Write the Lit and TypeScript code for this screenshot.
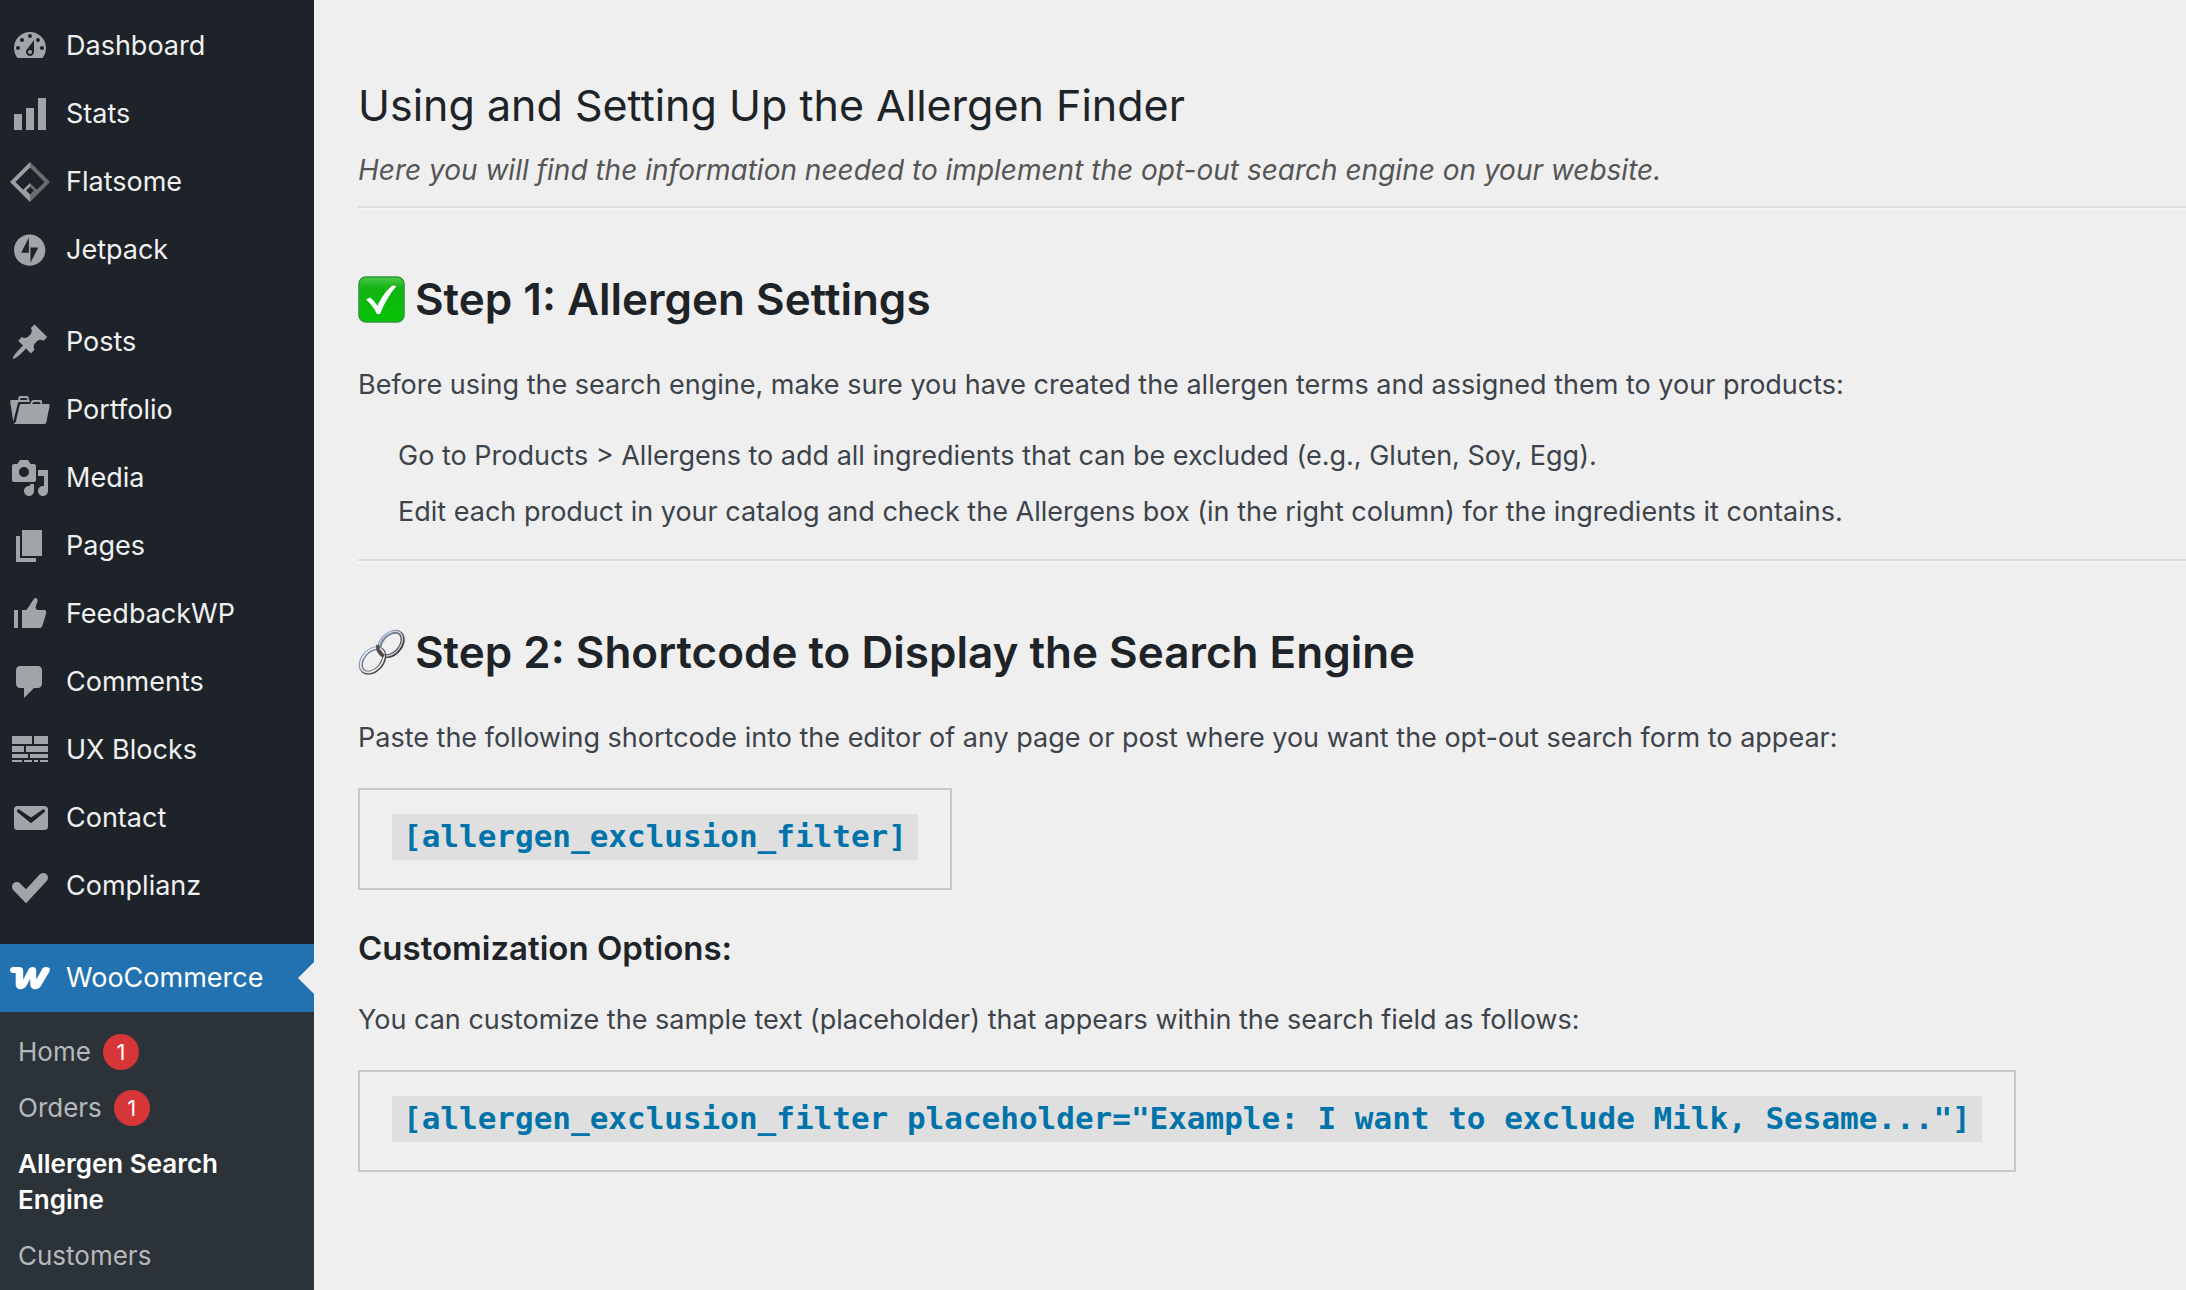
import { LitElement, html, css, svg, nothing } from "lit";
import { customElement } from "lit/decorators.js";

interface MenuItem {
  label: string;
  icon: unknown;
}

const glyph = (d: string) => svg`<path fill="currentColor" fill-rule="evenodd" d=${d}></path>`;

const icons = {
  dashboard: glyph(
    "M3.76 16h12.48c1.1-1.37 1.76-3.11 1.76-5 0-4.42-3.58-8-8-8s-8 3.58-8 8c0 1.89.66 3.63 1.76 5zM10 4c.55 0 1 .45 1 1s-.45 1-1 1-1-.45-1-1 .45-1 1-1zM6 6c.55 0 1 .45 1 1s-.45 1-1 1-1-.45-1-1 .45-1 1-1zm8 0c.55 0 1 .45 1 1s-.45 1-1 1-1-.45-1-1 .45-1 1-1zm-5.37 5.55L12 7v6c0 1.1-.9 2-2 2s-2-.9-2-2c0-.57.24-1.08.63-1.45zM4 10c.55 0 1 .45 1 1s-.45 1-1 1-1-.45-1-1 .45-1 1-1zm12 0c.55 0 1 .45 1 1s-.45 1-1 1-1-.45-1-1 .45-1 1-1zm-5 3c0-.55-.45-1-1-1s-1 .45-1 1 .45 1 1 1 1-.45 1-1z"
  ),
  stats: glyph("M18 18V2h-4v16h4zm-6 0V7H8v11h4zm-6 0v-8H2v8h4z"),
  flatsome: svg`
    <path fill="#9b9fa2" d="M10 0v2.7L2.7 10l3.9 3.9L10 10.5v1.9l-1.9 1.9 1.9 1.9V20L0 10z"></path>
    <path fill="#696e72" d="M10 0l10 10-10 10v-3.8l1.9-1.9-1.9-1.9v-1.9l3.4 3.4 3.9-3.9L10 2.7z"></path>`,
  jetpack: svg`<path fill="currentColor" fill-rule="evenodd" transform="translate(2 2.2) scale(.49)" d="M16 0C7.2 0 0 7.2 0 16s7.2 16 16 16 16-7.2 16-16S24.8 0 16 0zm-.8 18.6H7.3l7.9-15.5v15.5zm1.6 10.2V13.4h8l-8 15.5z"></path>`,
  posts: glyph(
    "M10.44 3.02l1.82-1.82 6.36 6.35-1.83 1.82c-1.05-.68-2.48-.57-3.41.36l-.75.75c-.92.93-1.04 2.35-.35 3.41l-1.83 1.82-2.41-2.41-2.8 2.79c-.42.42-3.38 2.71-3.8 2.29s1.86-3.39 2.28-3.81l2.79-2.79L4.1 9.36l1.83-1.82c1.05.69 2.48.57 3.4-.36l.75-.75c.93-.92 1.05-2.35.36-3.41z"
  ),
  portfolio: glyph(
    "M4 5H.78c-.37 0-.74.32-.69.84l1.56 9.99S3.5 8.47 3.86 6.7c.11-.53.61-.7.98-.7H10s-.7-2.08-.77-2.31C9.11 3.25 8.89 3 8.45 3H5.14c-.36 0-.7.23-.8.64C4.25 4.04 4 5 4 5zm4.88 0h-4s.42-1 .87-1h2.13c.48 0 1 1 1 1zM2.67 16.25c-.31.47-.76.75-1.26.75h15.73c.54 0 .92-.31 1.03-.83.44-2.19 1.68-8.44 1.68-8.44.07-.5-.3-.73-.62-.73H16V5.53c0-.16-.26-.53-.66-.53h-3.76c-.52 0-.87.58-.87.58L10 7H5.59c-.32 0-.63.19-.69.5 0 0-1.59 6.7-1.72 7.33-.07.37-.22.99-.51 1.42zM15.38 7H11s.58-1 1.13-1h2.29c.71 0 .96 1 .96 1z"
  ),
  media: glyph(
    "M13 11V4c0-.55-.45-1-1-1h-1.67L9 1H5L3.67 3H2c-.55 0-1 .45-1 1v7c0 .55.45 1 1 1h10c.55 0 1-.45 1-1zM7 4.5c1.38 0 2.5 1.12 2.5 2.5S8.38 9.5 7 9.5 4.5 8.38 4.5 7 5.62 4.5 7 4.5zM14 6h5v10.5c0 1.38-1.12 2.5-2.5 2.5S14 17.88 14 16.5s1.12-2.5 2.5-2.5c.17 0 .34.02.5.05V9h-3V6zm-4 8.05V13h2v3.5c0 1.38-1.12 2.5-2.5 2.5S7 17.88 7 16.5 8.12 14 9.5 14c.17 0 .34.02.5.05z"
  ),
  pages: glyph("M6 15V2h10v13H6zm-1 1h8v2H3V5h2v11z"),
  feedback: glyph(
    "M12.72 2c.15-.02.26.02.41.07.56.19.83.79.66 1.35-.17.55-1 3.04-1 3.58 0 .53.75 1 1.35 1h3c.6 0 1 .4 1 1s-2 7-2 7c-.17.39-.55 1-1 1H6V8h2.14c.41-.41 3.3-4.71 3.58-5.27.21-.41.6-.68 1-.73zM2 8h2v9H2V8z"
  ),
  comments: glyph(
    "M5 2h9c1.1 0 2 .9 2 2v7c0 1.1-.9 2-2 2h-2l-5 5v-5H5c-1.1 0-2-.9-2-2V4c0-1.1.9-2 2-2z"
  ),
  blocks: glyph(
    "M1 3h10v4H1zM12 3h7v4h-7zM1 8h6v3H1zM8 8h11v3H8zM1 12h8v2H1zM10 12h9v2h-9zM1 15h5v1H1zM7 15h4v1H7zM12 15h2v1h-2zM15 15h4v1h-4z"
  ),
  contact: glyph(
    "M3.87 4h13.25C18.37 4 19 4.59 19 5.79v8.42c0 1.19-.63 1.79-1.88 1.79H3.87c-1.25 0-1.88-.6-1.88-1.79V5.79c0-1.2.63-1.79 1.88-1.79zm6.62 8.6l6.74-5.53c.24-.2.43-.66.13-1.07-.29-.41-.82-.42-1.17-.17l-5.7 3.86L4.8 5.83c-.35-.25-.88-.24-1.17.17-.3.41-.11.87.13 1.07z"
  ),
  complianz: svg`<path fill="none" stroke="currentColor" stroke-width="4.8" stroke-linecap="round" d="M3.4 10.4L8 15.1l8.6-9.2"></path>`,
  woo: svg`<path fill="currentColor" transform="translate(0 4.5) scale(.2328)" d="M77.4.1c-4.3 0-7.1 1.4-9.6 6.1L56.4 27.6v-19c0-5.7-2.7-8.5-7.7-8.5s-7.1 1.7-9.6 6.5L28.3 27.6V8.8c0-6.1-2.5-8.7-8.6-8.7H7.3C2.6.1 0 2.3 0 6.3s2.5 6.4 7.1 6.4h5.1v24.1c0 6.8 4.6 10.8 11.2 10.8S33 45 36.3 38.9l7.2-13.5v11.4c0 6.7 4.4 10.8 11.1 10.8s9.2-2.3 13-8.7l16.6-28C87.8 4.8 85.3.1 77.4.1z"></path>`,
};

const menuGroups: MenuItem[][] = [
  [
    { label: "Dashboard", icon: icons.dashboard },
    { label: "Stats", icon: icons.stats },
    { label: "Flatsome", icon: icons.flatsome },
    { label: "Jetpack", icon: icons.jetpack },
  ],
  [
    { label: "Posts", icon: icons.posts },
    { label: "Portfolio", icon: icons.portfolio },
    { label: "Media", icon: icons.media },
    { label: "Pages", icon: icons.pages },
    { label: "FeedbackWP", icon: icons.feedback },
    { label: "Comments", icon: icons.comments },
    { label: "UX Blocks", icon: icons.blocks },
    { label: "Contact", icon: icons.contact },
    { label: "Complianz", icon: icons.complianz },
  ],
];

const submenu: { label: string; count?: number; current?: boolean }[] = [
  { label: "Home", count: 1 },
  { label: "Orders", count: 1 },
  { label: "Allergen Search Engine", current: true },
  { label: "Customers" },
];

@customElement("admin-menu")
class AdminMenu extends LitElement {
  static styles = css`
    :host {
      display: block;
      background: #1e2329;
      color: #f0f0f1;
      font-size: 27px;
      line-height: 36px;
    }
    ul {
      list-style: none;
      margin: 0;
      padding: 0;
    }
    a {
      color: inherit;
      text-decoration: none;
    }
    .menu {
      display: flex;
      flex-direction: column;
      gap: 24px;
      padding-top: 12px;
    }
    .item {
      display: flex;
      align-items: center;
      gap: 16px;
      padding: 14px 10px;
    }
    .icon {
      flex: none;
      width: 40px;
      height: 40px;
      color: #a0a5a9;
    }
    .active {
      position: relative;
      background: #2271b1;
      color: #fff;
    }
    .active .icon {
      color: #fff;
    }
    .active::after {
      content: "";
      position: absolute;
      right: 0;
      top: 50%;
      margin-top: -16px;
      border: 16px solid transparent;
      border-left: 0;
      border-right-color: #efefef;
    }
    .submenu {
      padding: 12px 0;
      background: #2c3338;
      color: #b5b9bd;
      font-size: 26px;
    }
    .sublink {
      display: flex;
      align-items: center;
      gap: 12px;
      padding: 10px 60px 10px 18px;
    }
    .current {
      color: #fff;
      font-weight: 600;
    }
    .badge {
      width: 36px;
      border-radius: 18px;
      background: #d63638;
      color: #fff;
      font-size: 22px;
      text-align: center;
    }
  `;

  private renderItem(item: MenuItem, active = false) {
    return html`<a class="item ${active ? "active" : ""}" href="#">
      <svg class="icon" viewBox="0 0 20 20" aria-hidden="true">${item.icon}</svg>
      <span>${item.label}</span>
    </a>`;
  }

  render() {
    return html`<nav class="menu">
      ${menuGroups.map(
        (group) => html`<ul>
          ${group.map((item) => html`<li>${this.renderItem(item)}</li>`)}
        </ul>`
      )}
      <ul>
        <li>
          ${this.renderItem({ label: "WooCommerce", icon: icons.woo }, true)}
          <ul class="submenu">
            ${submenu.map(
              (entry) => html`<li>
                <a class="sublink ${entry.current ? "current" : ""}" href="#">
                  <span>${entry.label}</span>
                  ${entry.count ? html`<span class="badge">${entry.count}</span>` : nothing}
                </a>
              </li>`
            )}
          </ul>
        </li>
      </ul>
    </nav>`;
  }
}

@customElement("allergen-guide")
class AllergenGuide extends LitElement {
  static styles = css`
    :host {
      display: block;
      padding: 76px 0 80px 44px;
      color: #3c434a;
      font-size: 27px;
      line-height: 40px;
    }
    h1,
    h2,
    h3,
    p,
    ul,
    hr {
      margin: 0;
    }
    h1,
    h2,
    h3 {
      color: #1d2327;
    }
    h1 {
      font-size: 43px;
      font-weight: 400;
      line-height: 58px;
    }
    .intro {
      margin-top: 16px;
      color: #555;
      font-size: 28px;
      font-style: italic;
    }
    hr {
      margin-top: 16px;
      border: 0;
      border-top: 2px solid #dcdcdd;
      border-bottom: 2px solid #f5f5f5;
    }
    h2 {
      display: flex;
      align-items: center;
      gap: 10px;
      margin-top: 59px;
      font-size: 44px;
      font-weight: 600;
      line-height: 60px;
    }
    .emoji {
      flex: none;
      width: 47px;
      height: 47px;
      overflow: visible;
    }
    h2 + p {
      margin-top: 36px;
    }
    ul {
      display: flex;
      flex-direction: column;
      gap: 16px;
      margin-top: 31px;
      padding: 0 0 11px 40px;
      list-style: none;
    }
    .snippet {
      width: fit-content;
      margin-top: 30px;
      padding: 24px 32px 28px;
      border: 2px solid #c8c8c9;
    }
    code {
      display: block;
      padding: 4px 11px 6px;
      background: #dfdfdf;
      color: #0073aa;
      font-family: "DejaVu Sans Mono", "Liberation Mono", monospace;
      font-size: 31px;
      font-weight: 700;
      line-height: 36px;
    }
    h3 {
      margin-top: 38px;
      font-size: 33px;
      font-weight: 600;
    }
    h3 + p {
      margin-top: 32px;
    }
  `;

  render() {
    return html`
      <h1>Using and Setting Up the Allergen Finder</h1>
      <p class="intro">
        Here you will find the information needed to implement the opt-out search engine on your website.
      </p>
      <hr />
      <h2>
        <svg class="emoji" viewBox="0 0 47 47" aria-hidden="true">
          <defs>
            <linearGradient id="tile" x1="0" y1="0" x2="0" y2="1">
              <stop offset="0" stop-color="#4cc94c"></stop>
              <stop offset=".25" stop-color="#12b312"></stop>
              <stop offset="1" stop-color="#04c404"></stop>
            </linearGradient>
          </defs>
          <rect x="1" y="1" width="45" height="45" rx="7" fill="url(#tile)" stroke="#2f9a36" stroke-width="1.6"></rect>
          <path d="M8 23.5l4-2c3.500 2.500 5.500 5 7.500 8.500C23 22 28 14.500 34.500 9.500l4 .5C31.500 18 26.500 27 22 38h-3c-3-6-6.500-10.500-11-14.500z" fill="#fff"></path>
        </svg>
        <span>Step 1: Allergen Settings</span>
      </h2>
      <p>
        Before using the search engine, make sure you have created the allergen terms and assigned them to your
        products:
      </p>
      <ul>
        <li>Go to Products &gt; Allergens to add all ingredients that can be excluded (e.g., Gluten, Soy, Egg).</li>
        <li>
          Edit each product in your catalog and check the Allergens box (in the right column) for the ingredients it
          contains.
        </li>
      </ul>
      <hr />
      <h2>
        <svg class="emoji" viewBox="0 0 47 47" aria-hidden="true">
          <defs>
            <linearGradient id="steel" x1="0" y1="0" x2="1" y2="0">
              <stop offset="0" stop-color="#7c8ea8"></stop>
              <stop offset=".5" stop-color="#6a6670"></stop>
              <stop offset="1" stop-color="#49383c"></stop>
            </linearGradient>
          </defs>
          <g fill="none">
            <ellipse cx="33" cy="15" rx="9.500" ry="14" transform="rotate(42 33 15)" stroke="url(#steel)" stroke-width="4"></ellipse>
            <ellipse cx="32.600" cy="14.600" rx="9.700" ry="14.200" transform="rotate(42 32.600 14.600)" stroke="#c9d3e2" stroke-width="1.300"></ellipse>
            <ellipse cx="14.500" cy="31.500" rx="9.500" ry="14" transform="rotate(42 14.500 31.500)" stroke="url(#steel)" stroke-width="4"></ellipse>
            <ellipse cx="14.300" cy="31.200" rx="9.500" ry="14" transform="rotate(42 14.300 31.200)" stroke="#e3eaf3" stroke-width="1.800"></ellipse>
            <path d="M20 16c-1 4 1 8 6 11" stroke="#54484d" stroke-width="3.500"></path>
          </g>
        </svg>
        <span>Step 2: Shortcode to Display the Search Engine</span>
      </h2>
      <p>Paste the following shortcode into the editor of any page or post where you want the opt-out search form to appear:</p>
      <div class="snippet"><code>[allergen_exclusion_filter]</code></div>
      <h3>Customization Options:</h3>
      <p>You can customize the sample text (placeholder) that appears within the search field as follows:</p>
      <div class="snippet">
        <code>[allergen_exclusion_filter placeholder="Example: I want to exclude Milk, Sesame..."]</code>
      </div>
    `;
  }
}

@customElement("app-root")
class AppRoot extends LitElement {
  static styles = css`
    :host {
      display: grid;
      grid-template-columns: 314px minmax(0, 1fr);
      height: 100vh;
      overflow: hidden;
      background: #efefef;
      font-family: Inter, Roboto, "Liberation Sans", sans-serif;
    }
  `;

  render() {
    return html`<admin-menu></admin-menu>
      <main><allergen-guide></allergen-guide></main>`;
  }
}
